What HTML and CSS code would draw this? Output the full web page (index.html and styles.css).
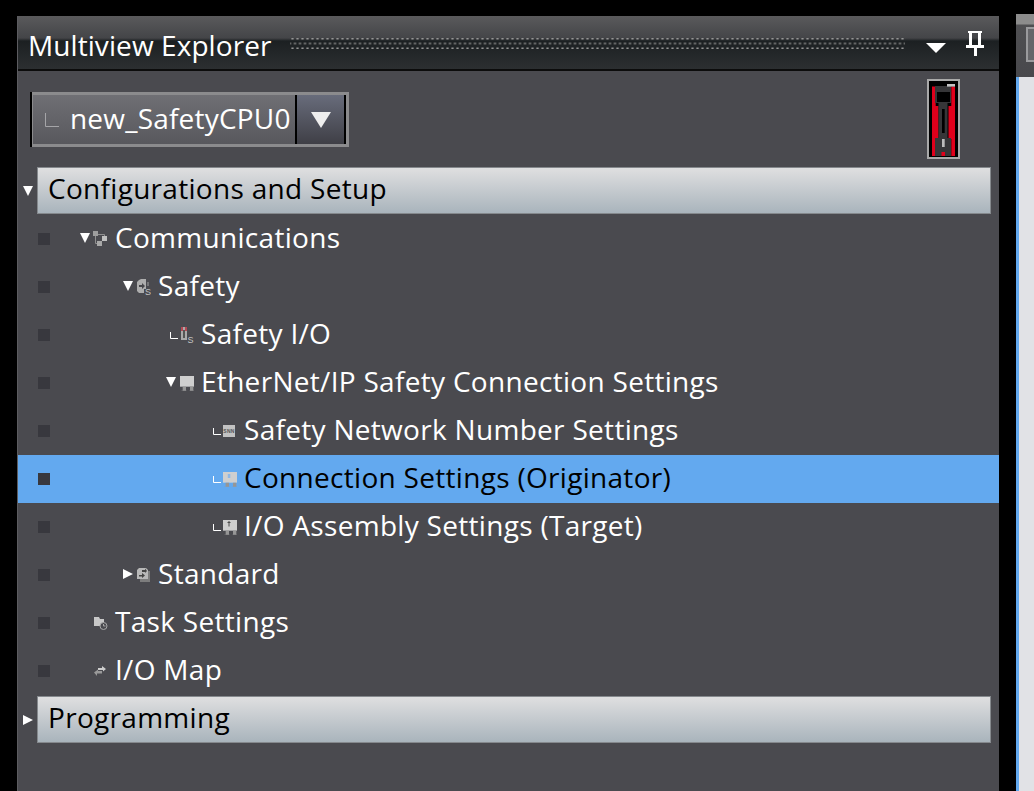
FILE: index.html
```html
<!DOCTYPE html>
<html lang="en">
<head>
<meta charset="utf-8">
<title>Multiview Explorer</title>
<link rel="stylesheet" href="styles.css">
</head>
<body>
<svg class="defs" width="0" height="0" aria-hidden="true">
  <defs>
    <symbol id="down" viewBox="0 0 10 10"><path d="M0 0H10L5 10Z" fill="#fff"/></symbol>
    <symbol id="right" viewBox="0 0 10 10"><path d="M0 0L10 5L0 10Z" fill="#fff"/></symbol>
    <symbol id="corner" viewBox="0 0 8 7"><path d="M.5 0V6.500H8" fill="none" stroke="#fff"/></symbol>
    <symbol id="screen" viewBox="0 0 12 12"><rect width="12" height="8" fill="#cfcfcf"/><path d="M2 8H4.500V11H2ZM7.500 8H10V11H7.500Z" fill="#969696"/><path d="M1 11.500H5M7 11.500H11" stroke="#969696"/></symbol>
  </defs>
</svg>
<main class="panel">
  <header class="titlebar">
    <h1 class="title">Multiview Explorer</h1>
    <div class="gripper"></div>
    <svg class="menu-arrow" viewBox="0 0 20 10"><path d="M0 0H20L10 10Z" fill="#fff"/></svg>
    <svg class="pin" viewBox="0 0 18 25"><path fill-rule="evenodd" d="M2 0H16V2H15V14H18V17H11V25H8V17H0V14H3V2H2ZM6 2V14H12V2Z" fill="#fff"/></svg>
  </header>
  <div class="toolbar">
    <div class="combo">
      <div class="combo-field">
        <svg class="combo-corner" viewBox="0 0 14 14"><path d="M.5 0V13.500H14" fill="none" stroke="#a5a5a8"/></svg>
        <span class="combo-text">new_SafetyCPU0</span>
      </div>
      <div class="combo-button"><svg class="combo-arrow" viewBox="0 0 20 16"><path d="M0 0H20L10 16Z" fill="#eee"/></svg></div>
    </div>
    <svg class="module" viewBox="0 0 33 80">
      <rect x="1" y="1" width="31" height="78" fill="#000" stroke="#a9a9a9" stroke-width="2"/>
      <path d="M5 7.500H8.700V27H11.500V60H8.700V77H5ZM24.300 7.500H28V77H24.300V60H21.500V27H24.300Z" fill="#e0001b"/>
      <path d="M8 7H24V24H20.500V59H24V77H8V59H11.500V24H8Z" fill="#363638"/>
      <rect x="10" y="13" width="13" height="10" fill="#000"/>
      <rect x="15" y="30" width="2.700" height="24" fill="#000"/>
      <rect x="15" y="60" width="2.700" height="8" fill="#bbb"/>
      <rect x="14.500" y="73" width="3.500" height="4" fill="#e0001b"/>
      <rect x="20" y="5" width="8" height="2.600" fill="#c4c4c4"/>
    </svg>
  </div>
  <section class="section-head">
    <svg class="head-arrow"><use href="#down"/></svg>
    <div class="head-bar"><span class="head-text">Configurations and Setup</span></div>
  </section>
  <ul class="tree">
    <li class="row l1">
      <span class="sq"></span><span class="twist"><svg class="arrow"><use href="#down"/></svg></span>
      <svg class="ico" viewBox="0 0 16 16"><path d="M3.500 5V12.500H6M6 3.500H12.500V6" fill="none" stroke="#909090"/><rect x="1" y="0" width="5" height="5" fill="#9e9e9e"/><rect x="10" y="5" width="5" height="5" fill="#c0c0c0"/><rect x="5" y="10" width="5" height="5" fill="#a8a8a8"/></svg>
      <span class="label">Communications</span>
    </li>
    <li class="row l2">
      <span class="sq"></span><span class="twist"><svg class="arrow"><use href="#down"/></svg></span>
      <svg class="ico" viewBox="0 0 16 16"><path d="M4 1L6 0H11V10H9V14H4L2 12V3Z" fill="#adadad"/><path d="M4 6H7V4L10 7L7 10V8H4Z" fill="#46464a"/><path d="M13 3V7" stroke="#a0a0a0"/><text class="ico-s" x="10" y="15.500">S</text></svg>
      <span class="label">Safety</span>
    </li>
    <li class="row l3">
      <span class="sq"></span><span class="twist"><svg class="corner"><use href="#corner"/></svg></span>
      <svg class="ico" viewBox="0 0 16 16"><path d="M3 0H9V13H3Z" fill="#aaa"/><path d="M3 0H5V4H3ZM7 0H9V4H7Z" fill="#b34a55"/><path d="M5 3H7V11H5Z" fill="#555"/><text class="ico-s" x="9.500" y="15.500">S</text></svg>
      <span class="label">Safety I/O</span>
    </li>
    <li class="row l3">
      <span class="sq"></span><span class="twist"><svg class="arrow"><use href="#down"/></svg></span>
      <svg class="ico" viewBox="-2 -1 16 16"><use href="#screen"/></svg>
      <span class="label">EtherNet/IP Safety Connection Settings</span>
    </li>
    <li class="row l4">
      <span class="sq"></span><span class="twist"><svg class="corner"><use href="#corner"/></svg></span>
      <svg class="ico" viewBox="0 0 16 16"><rect x="2" y="2" width="12" height="12" fill="#c2c2c2"/><text class="ico-snn" x="8" y="10">SNN</text></svg>
      <span class="label">Safety Network Number Settings</span>
    </li>
    <li class="row l4 selected">
      <span class="sq"></span><span class="twist"><svg class="corner"><use href="#corner"/></svg></span>
      <svg class="ico" viewBox="-2 -1 16 16"><use href="#screen"/><rect x="4.800" y="2" width="2.500" height="4" fill="#8fb8e6"/></svg>
      <span class="label">Connection Settings (Originator)</span>
    </li>
    <li class="row l4">
      <span class="sq"></span><span class="twist"><svg class="corner"><use href="#corner"/></svg></span>
      <svg class="ico" viewBox="-2 -1 16 16"><use href="#screen"/><path d="M6 1L8 3H6.500V6.500H5.500V3H4Z" fill="#4c4c4c"/></svg>
      <span class="label">I/O Assembly Settings (Target)</span>
    </li>
    <li class="row l2">
      <span class="sq"></span><span class="twist"><svg class="arrow"><use href="#right"/></svg></span>
      <svg class="ico" viewBox="0 0 16 16"><path d="M5 4H15V15H5Z" fill="#7d7d7d"/><path d="M4 1H11L13 3V12H2V3Z" fill="#b8b8b8"/><path d="M4 8H7V6L10 8.500L7 11V9.500H4Z" fill="#444"/><path d="M7 3H10V1.500L12 4L10 6V5H7Z" fill="#444"/></svg>
      <span class="label">Standard</span>
    </li>
    <li class="row l1">
      <span class="sq"></span><span class="twist"></span>
      <svg class="ico" viewBox="0 0 16 16"><path d="M2 2H7L8 4H12V11H2Z" fill="#c8c8c8"/><circle cx="11.500" cy="11" r="3.500" fill="#4a4a4f" stroke="#a8a8a8"/><path d="M11.500 9V11H13.500" fill="none" stroke="#a8a8a8"/></svg>
      <span class="label">Task Settings</span>
    </li>
    <li class="row l1">
      <span class="sq"></span><span class="twist"></span>
      <svg class="ico" viewBox="0 0 16 16"><path d="M6 5H10V3L14 6L11 8.500V7H6Z" fill="#cdcdcd"/><path d="M10 8H6V6.500L2 9.500L5 13V10.500H10Z" fill="#9a9a9a"/></svg>
      <span class="label">I/O Map</span>
    </li>
  </ul>
  <section class="section-head">
    <svg class="head-arrow"><use href="#right"/></svg>
    <div class="head-bar"><span class="head-text">Programming</span></div>
  </section>
</main>
<aside class="editor">
  <div class="editor-top"><div class="editor-icon"></div></div>
  <div class="editor-body"></div>
</aside>
</body>
</html>
```
FILE: styles.css
```css
* { box-sizing: border-box; }
html, body { margin: 0; height: 791px; overflow: hidden; }
body {
  background: #000;
  display: flex;
  align-items: flex-start;
  font-family: "Open Sans", "Noto Sans", sans-serif;
}
.defs { position: absolute; }

.panel {
  margin: 16px 0 0 17px;
  width: 982px;
  height: 775px;
  flex: none;
  background: #4a4a4f;
  border-left: 1px solid #5c5c60;
}

.titlebar {
  height: 55px;
  display: flex;
  align-items: center;
  padding: 0 15px 2px 10px;
  border-bottom: 2px solid #0c0c0c;
  background: linear-gradient(#5a5a5c 0, #444548 22px, #1c2022 25px, #2c2f31 100%);
}
.title {
  margin: 7px 0 0;
  font-size: 28px;
  font-weight: 400;
  letter-spacing: 0.08px;
  color: #fff;
  white-space: nowrap;
}
.gripper {
  flex: 1;
  height: 11px;
  margin: 3px 21px 0 18px;
  background-image:
    radial-gradient(circle, #949494 1px, transparent 1.3px),
    radial-gradient(circle, #747474 1px, transparent 1.3px);
  background-size: 5px 10px;
  background-position: 0 -4.500px, 2.500px 0.500px;
}
.menu-arrow { width: 20px; height: 10px; margin-top: 13px; flex: none; }
.pin { width: 18px; height: 25px; margin: 4px 0 0 20px; flex: none; }

.toolbar {
  height: 96px;
  display: flex;
  justify-content: space-between;
  align-items: flex-start;
  padding: 8px 39px 0 12px;
}
.combo {
  width: 319px;
  height: 55px;
  margin-top: 13px;
  display: flex;
  border: 3px solid #8b8b8d;
  border-left: 0;
}
.combo::before {
  content: "";
  width: 3px;
  background: linear-gradient(90deg, #000 66%, #8b8b8d 66%);
  margin: -3px 0;
  flex: none;
}
.combo-field {
  flex: 1;
  min-width: 0;
  display: flex;
  align-items: center;
  padding-left: 12px;
  background: linear-gradient(#6f6f74, #58585d);
}
.combo-corner { width: 14px; height: 14px; flex: none; }
.combo-text {
  margin: -4px 0 0 11px;
  font-size: 28px;
  letter-spacing: 0.2px;
  color: #fff;
  white-space: nowrap;
}
.combo-button {
  width: 51px;
  flex: none;
  display: flex;
  align-items: center;
  justify-content: center;
  border-left: 2px solid #000;
  border-right: 2px solid #000;
  background: linear-gradient(#686c7b, #3f3f46);
}
.combo-arrow { width: 20px; height: 16px; }
.module { width: 33px; height: 80px; flex: none; }

.section-head {
  height: 47px;
  display: flex;
  align-items: center;
  padding: 0 8px 0 5px;
  margin-bottom: 1px;
}
.tree + .section-head { margin-top: 1px; }
.head-arrow { width: 10px; height: 10px; flex: none; margin-right: 4px; }
.head-bar {
  flex: 1;
  height: 47px;
  padding-left: 10px;
  display: flex;
  align-items: center;
  font-size: 28px;
  letter-spacing: 0.3px;
  color: #000;
  border: 1px solid #85898d;
  background: linear-gradient(#dfdfe0, #a9b4bc);
}
.head-text { margin-top: -6px; }

.tree { list-style: none; margin: 0; padding: 0; }
.row {
  height: 48px;
  display: flex;
  align-items: center;
  padding-left: 20px;
  color: #fff;
  font-size: 28px;
  letter-spacing: 0.3px;
  white-space: nowrap;
}
.row.selected { background: #63a9ef; color: #000; }
.sq { width: 12px; height: 12px; flex: none; background: #38383e; }
.l1 .sq { margin-right: 30px; }
.l2 .sq { margin-right: 73px; }
.l3 .sq { margin-right: 116px; }
.l4 .sq { margin-right: 159px; }
.twist { width: 12px; height: 16px; flex: none; display: flex; align-items: center; }
.arrow { width: 10px; height: 10px; margin-top: -2px; }
.corner { width: 8px; height: 7px; margin-left: 4px; }
.ico { width: 16px; height: 16px; flex: none; }
.ico-s { font: 9px "Liberation Sans", sans-serif; fill: #c4c4c4; }
.ico-snn { font: bold 5px "Liberation Sans", sans-serif; fill: #555; text-anchor: middle; }
.label { margin: -4px 0 0 7px; }

.editor {
  margin: 14px 0 0 17px;
  flex: 1;
  height: 777px;
  display: flex;
  flex-direction: column;
}
.editor-top {
  height: 63px;
  padding: 13px 0 0 10px;
  background: linear-gradient(#8c8c8c 0, #8c8c8c 10px, #4f4f52 11px, #48484c 100%);
}
.editor-icon {
  width: 20px;
  height: 35px;
  border: 2px solid #9a9a9d;
  background: #66666a;
}
.editor-body {
  flex: 1;
  border-left: 3px solid #63a9ef;
  background: #e1e2e6;
}
```
